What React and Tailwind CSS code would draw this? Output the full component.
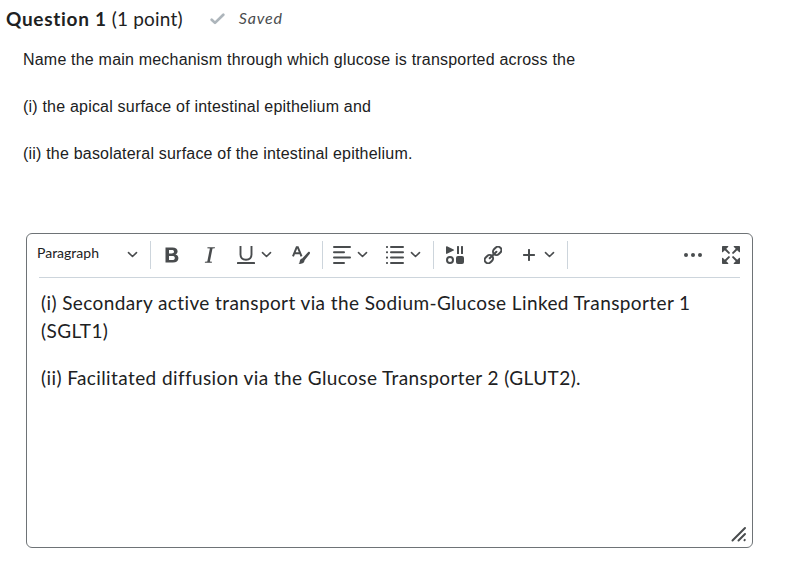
const Icon = ({ className = '', children }) => (
  <svg
    className={`h-[18px] w-[18px] shrink-0 text-[#494c4e] ${className}`}
    viewBox="0 0 18 18"
    fill="currentColor"
    aria-hidden="true"
  >
    {children}
  </svg>
);

const Chevron = ({ className = '' }) => (
  <svg className={`h-[7px] w-[11px] shrink-0 text-[#494c4e] ${className}`} viewBox="0 0 11 7" fill="none" aria-hidden="true">
    <path d="M1.500 1.600 5.500 5.500 9.500 1.600" stroke="currentColor" strokeWidth="1.600" strokeLinecap="round" strokeLinejoin="round" />
  </svg>
);

const Divider = ({ className = '' }) => (
  <div className={`h-7 w-px shrink-0 bg-[#cdd5dc] ${className}`} />
);

const BoldIcon = () => (
  <Icon>
    <path
      fillRule="evenodd"
      d="M2.500 1.500h7c3.100 0 5.100 1.300 5.100 3.800 0 1.600-.8 2.700-2.200 3.200 2 .5 3 1.800 3 3.700 0 2.800-2.100 4.300-5.500 4.300H2.500ZM6 4.100v3.400h2.700c1.500 0 2.300-.5 2.300-1.700S10.300 4.100 8.900 4.100ZM6 10v4h3.200c1.700 0 2.600-.6 2.600-2s-.9-2-2.600-2Z"
    />
  </Icon>
);

const ItalicIcon = () => (
  <Icon>
    <path d="M6.500 1.200H14l-.2 1-2.300.4-2.600 12.800 2.100.4-.2 1H3.800l.2-1 2.300-.4L8.900 2.600l-2.600-.4Z" />
  </Icon>
);

const UnderlineIcon = () => (
  <Icon>
    <path d="M3.500 0v8.500c0 3.200 1.900 5.200 5.500 5.200s5.500-2 5.500-5.200V0" fill="none" stroke="currentColor" strokeWidth="1.900" />
    <rect x="0" y="16" width="18" height="2" rx=".6" />
  </Icon>
);

const FormatIcon = () => (
  <Icon>
    <path d="M1 10.300 4.700 1.200h1.100l3.700 9.100M2.500 7.300h5.700" fill="none" stroke="currentColor" strokeWidth="2" />
    <path d="M17.600 6.100c.6.500.5 1.200 0 1.900l-5 6.300c-.2 2.700-2.400 4-6.100 3.500 1.100-.8 1-1.600 1.300-2.900.3-1.400 1.100-2.300 2.400-2.500L16 6.300c.6-.5 1.100-.6 1.600-.2Z" />
  </Icon>
);

const AlignIcon = () => (
  <Icon>
    <rect y="0" width="18" height="2" rx="1" />
    <rect y="5.300" width="12" height="2" rx="1" />
    <rect y="10.600" width="18" height="2" rx="1" />
    <rect y="16" width="12" height="2" rx="1" />
  </Icon>
);

const ListIcon = () => (
  <Icon>
    {[0, 5.3, 10.6, 16].map((y) => (
      <g key={y}>
        <rect x="0" y={y} width="2" height="2" rx=".7" />
        <rect x="4" y={y} width="14" height="2" rx="1" />
      </g>
    ))}
  </Icon>
);

const InsertStuffIcon = () => (
  <Icon>
    <path d="M0 .8C0 .2.500 0 1 .200l6.600 3.200c.6.300.6.900 0 1.200L1 7.800c-.5.200-1 0-1-.6Z" />
    <rect x="11" y="0" width="2" height="8" rx=".5" />
    <rect x="15" y="0" width="2" height="8" rx=".5" />
    <circle cx="4" cy="14" r="3" fill="none" stroke="currentColor" strokeWidth="2" />
    <rect x="10" y="10" width="8" height="8" rx="2" />
  </Icon>
);

const LinkIcon = () => (
  <Icon>
    <g fill="none" stroke="currentColor" strokeWidth="2">
      <rect x="-4.500" y="-3.400" width="9" height="6.800" rx="3.400" transform="translate(13.200 4.900) rotate(-45)" />
      <rect x="-4.500" y="-3.400" width="9" height="6.800" rx="3.400" transform="translate(4.900 13.100) rotate(-45)" />
      <path d="m5.700 12.300 6.700-6.600" strokeLinecap="round" />
    </g>
  </Icon>
);

const PlusIcon = () => (
  <Icon>
    <path d="M9 4v10M4 9h10" stroke="currentColor" strokeWidth="2" strokeLinecap="round" />
    <path d="M9 3.500v11M3.500 9h11" stroke="currentColor" strokeWidth="2" />
  </Icon>
);

const MoreIcon = () => (
  <Icon>
    <circle cx="2" cy="9" r="2" />
    <circle cx="9" cy="9" r="2" />
    <circle cx="16" cy="9" r="2" />
  </Icon>
);

const FullscreenIcon = () => (
  <Icon>
    {[0, 90, 180, 270].map((angle) => (
      <g key={angle} transform={`rotate(${angle} 9 9)`}>
        <path d="M.8 0h4.900c.6 0 .8.600.4 1L1 6.100c-.4.400-1 .200-1-.4V.8C0 .300.300 0 .8 0Z" />
        <path d="m3 3 3.900 3.900" stroke="currentColor" strokeWidth="2" strokeLinecap="round" />
      </g>
    ))}
  </Icon>
);

const Toolbar = () => (
  <div className="mx-3 flex h-11 items-center border-b border-[#cdd5dc] pb-0.5">
    <button className="-ml-0.5 flex w-[101px] items-center justify-between">
      <span className="relative -top-0.5 font-[Lato] text-sm leading-5 text-[#202122]">Paragraph</span>
      <Chevron />
    </button>
    <Divider className="ml-3" />
    <div className="ml-3 flex items-center gap-5">
      <BoldIcon />
      <ItalicIcon />
    </div>
    <div className="ml-[18px] flex items-center gap-[6px]">
      <UnderlineIcon />
      <Chevron />
    </div>
    <div className="ml-5">
      <FormatIcon />
    </div>
    <Divider className="ml-3" />
    <div className="ml-[10px] flex items-center gap-[6px]">
      <AlignIcon />
      <Chevron />
    </div>
    <div className="ml-[18px] flex items-center gap-[6px]">
      <ListIcon />
      <Chevron />
    </div>
    <Divider className="ml-3" />
    <div className="ml-3 flex items-center gap-5">
      <InsertStuffIcon />
      <LinkIcon />
    </div>
    <div className="ml-[18px] flex items-center gap-[6px]">
      <PlusIcon />
      <Chevron />
    </div>
    <Divider className="ml-3" />
    <div className="ml-auto flex items-center gap-5">
      <MoreIcon />
      <FullscreenIcon />
    </div>
  </div>
);

const Editor = () => (
  <div className="ml-[26px] mt-[67px] flex h-[315px] w-[727px] flex-col rounded-md border border-[#6e7376] bg-white">
    <Toolbar />
    <div className="flex-1 px-[14px] pt-[11px] font-[Lato] text-[19px] leading-7 tracking-[0.4px] text-[#202122]">
      <p>
        (i) Secondary active transport via the Sodium-Glucose Linked Transporter 1
        <br />
        (SGLT1)
      </p>
      <p className="mt-[19px]">(ii) Facilitated diffusion via the Glucose Transporter 2 (GLUT2).</p>
    </div>
    <div className="flex justify-end pb-[5px] pr-[5px]">
      <svg className="h-4 w-4 text-[#494c4e]" viewBox="0 0 16 16" fill="none" stroke="currentColor" strokeWidth="2" strokeLinecap="round">
        <path d="M1.500 14.500 14 2M7.500 14.500 14 8M13.500 14.200l.3-.3" />
      </svg>
    </div>
  </div>
);

const App = () => (
  <main className="h-[573px] w-[803px] overflow-hidden bg-white">
    <header className="flex h-[39px] items-center pb-0.5 pl-[6px] font-[Lato] text-[19px] leading-7 text-[#202122]">
      <h2 className="tracking-[0.2px]">
        <b className="font-bold tracking-[0.7px]">Question 1</b> (1 point)
      </h2>
      <svg className="ml-[27px] h-3 w-4 text-[#adb5bb]" viewBox="0 0 16 12" fill="none">
        <path d="M1.700 6.700 5 9.900 13.300 1.700" stroke="currentColor" strokeWidth="2.700" strokeLinecap="round" strokeLinejoin="round" />
      </svg>
      <span className="relative -top-px ml-[13px] text-base italic tracking-[0.8px] text-[#494c4e]">Saved</span>
    </header>
    <div className="ml-[23px] mt-[9px] space-y-[23px] font-['Liberation_Sans'] text-base leading-6 tracking-[0.2px] text-[#202122]">
      <p>Name the main mechanism through which glucose is transported across the</p>
      <p>(i) the apical surface of intestinal epithelium and</p>
      <p>(ii) the basolateral surface of the intestinal epithelium.</p>
    </div>
    <Editor />
  </main>
);

export default App;
